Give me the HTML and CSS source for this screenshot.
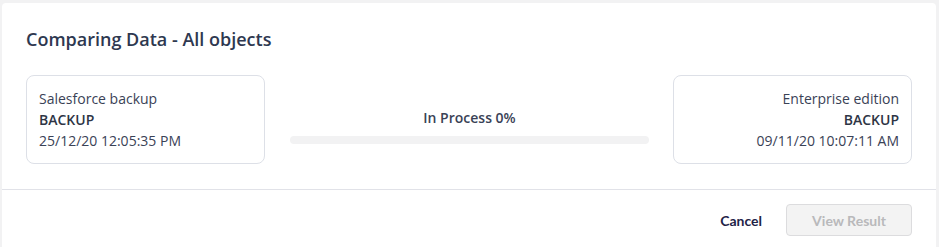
FILE: index.html
```html
<!DOCTYPE html>
<html lang="en">
<head>
<meta charset="utf-8">
<title>Comparing Data</title>
<link rel="stylesheet" href="styles.css">
</head>
<body>
<div class="modal">
  <div class="modal-body">
    <h2 class="title">Comparing Data - All objects</h2>
    <div class="compare-row">
      <div class="source-box">
        <div class="src-name">Salesforce backup</div>
        <div class="src-type">BACKUP</div>
        <div class="src-date">25/12/20 12:05:35 PM</div>
      </div>
      <div class="progress-col">
        <div class="progress-label">In Process 0%</div>
        <div class="progress-track"><div class="progress-fill" style="width:0%"></div></div>
      </div>
      <div class="source-box right">
        <div class="src-name">Enterprise edition</div>
        <div class="src-type">BACKUP</div>
        <div class="src-date">09/11/20 10:07:11 AM</div>
      </div>
    </div>
  </div>
  <div class="modal-footer">
    <button class="btn-link">Cancel</button>
    <button class="btn-disabled" disabled>View Result</button>
  </div>
</div>
</body>
</html>
```
FILE: styles.css
```css
html, body {
  margin: 0;
  padding: 0;
  background: #f2f2f3;
  height: 100%;
  overflow: hidden;
}
body {
  font-family: "Open Sans", "Liberation Sans", sans-serif;
  color: #3a4256;
}
.modal {
  margin: 3px 3px 0 2px;
  background: #ffffff;
  border-radius: 4px 4px 0 0;
  height: 244px;
  overflow: hidden;
}
.modal-body {
  padding: 24px 24px 25px 24px;
  border-bottom: 1px solid #e1e2e8;
}
.title {
  margin: 0 0 24px 0;
  font-size: 18px;
  line-height: 24px;
  font-weight: 600;
  color: #2e3850;
}
.compare-row {
  display: flex;
  align-items: flex-start;
}
.source-box {
  width: 239px;
  box-sizing: border-box;
  border: 1px solid #dde0e7;
  border-radius: 8px;
  padding: 12px;
  font-size: 14px;
  line-height: 21px;
}
.source-box.right {
  text-align: right;
}
.src-name, .src-date {
  color: #3a4256;
}
.src-type {
  font-weight: 600;
  color: #2e3545;
}
.progress-col {
  flex: 1;
  display: flex;
  flex-direction: column;
  align-items: center;
  padding: 32px 24px 0 25px;
}
.progress-label {
  font-size: 14px;
  line-height: 21px;
  font-weight: 600;
  color: #3a4256;
  margin-bottom: 8px;
}
.progress-track {
  width: 100%;
  height: 8px;
  border-radius: 4px;
  background: #f2f2f3;
  overflow: hidden;
}
.progress-fill {
  height: 100%;
  background: #4a7cf0;
}
.modal-footer {
  display: flex;
  justify-content: flex-end;
  align-items: center;
  gap: 24px;
  padding: 14px 24px 0 24px;
}
.btn-link {
  font-family: "Lato", "Liberation Sans", sans-serif;
  font-size: 14px;
  font-weight: 700;
  color: #1f2347;
  background: none;
  border: none;
  padding: 0;
}
.btn-disabled {
  font-family: "Lato", "Liberation Sans", sans-serif;
  font-size: 14px;
  font-weight: 700;
  color: #b9b9bb;
  background: #f3f3f3;
  border: 1px solid #dcdcde;
  border-radius: 4px;
  width: 126px;
  height: 32px;
  padding: 0;
}
```
